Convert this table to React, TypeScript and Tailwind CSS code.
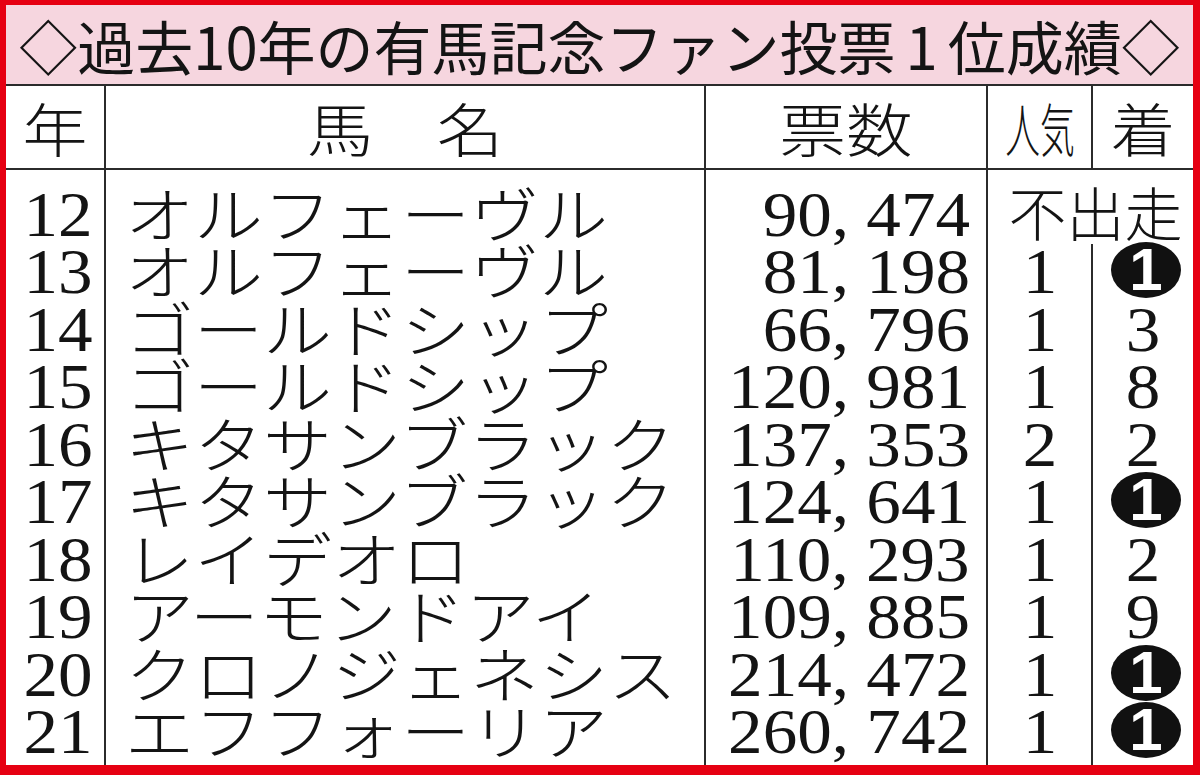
import React from "react";

type Row = { y: string; name: string; votes: string; pop: string | null; fin: string | null };

const rows: Row[] = [
  { y: "12", name: "オルフェーヴル", votes: "90, 474", pop: null, fin: null },
  { y: "13", name: "オルフェーヴル", votes: "81, 198", pop: "1", fin: "W1" },
  { y: "14", name: "ゴールドシップ", votes: "66, 796", pop: "1", fin: "3" },
  { y: "15", name: "ゴールドシップ", votes: "120, 981", pop: "1", fin: "8" },
  { y: "16", name: "キタサンブラック", votes: "137, 353", pop: "2", fin: "2" },
  { y: "17", name: "キタサンブラック", votes: "124, 641", pop: "1", fin: "W1" },
  { y: "18", name: "レイデオロ", votes: "110, 293", pop: "1", fin: "2" },
  { y: "19", name: "アーモンドアイ", votes: "109, 885", pop: "1", fin: "9" },
  { y: "20", name: "クロノジェネシス", votes: "214, 472", pop: "1", fin: "W1" },
  { y: "21", name: "エフフォーリア", votes: "260, 742", pop: "1", fin: "W1" },
];

const line = "border-[#2b2b2b]";
const serif = "font-['Liberation_Serif',serif]";
const goth = "font-['Noto_Sans_CJK_JP',sans-serif]";

function Win() {
  return (
    <span className="ml-[6px] flex h-[56px] w-[70px] shrink-0 -translate-y-[2px] items-center justify-center rounded-[50%] bg-[#111]">
      <span className="font-['Liberation_Sans',sans-serif] text-[60px] font-bold leading-none text-white">1</span>
    </span>
  );
}

export default function App() {
  return (
    <div className="flex h-[775px] w-[1200px] flex-col overflow-hidden border-t-[5px] border-r-[7px] border-b-[10px] border-l-[6px] border-[#e60012] bg-white text-[#141414]">
      {/* title */}
      <div className={`flex h-[79px] shrink-0 items-center justify-center bg-[#f6d6df] ${goth} text-[58px] leading-none whitespace-nowrap`}>
        <span>◇過去10年の有馬記念ファン投票<span className="mx-[10px]">1</span>位成績◇</span>
      </div>

      {/* header */}
      <div className={`grid h-[86px] shrink-0 grid-cols-[100px_600px_282px_105px_1fr] border-y-2 ${line} ${goth} text-[58px] font-light leading-none`}>
        <div className={`flex items-center justify-center border-r-2 ${line}`}>
          <span className="inline-block scale-x-[1.12]">年</span>
        </div>
        <div className={`flex items-center justify-center gap-[72px] border-r-2 ${line}`}>
          <span className="inline-block scale-x-[1.15]">馬</span>
          <span className="inline-block scale-x-[1.15]">名</span>
        </div>
        <div className={`flex items-center justify-center border-r-2 ${line}`}>
          <span className="inline-block scale-x-[1.15]">票数</span>
        </div>
        <div className={`flex items-center justify-center border-r-2 ${line}`}>
          <span className="inline-block scale-x-[0.6] whitespace-nowrap">人気</span>
        </div>
        <div className="flex items-center justify-center">
          <span className="inline-block scale-x-[1.12]">着</span>
        </div>
      </div>

      {/* body */}
      <div className="grid min-h-0 flex-1 grid-cols-[100px_600px_282px_105px_1fr] grid-rows-[16px_repeat(10,57.5px)_1fr]">
        {/* top spacer */}
        <div className={`border-r-2 ${line}`} />
        <div className={`border-r-2 ${line}`} />
        <div className={`border-r-2 ${line}`} />
        <div className="col-span-2" />

        {rows.map((r) => (
          <React.Fragment key={r.y}>
            <div className={`flex items-center justify-center border-r-2 ${line} pl-[6px] ${serif} text-[64px] leading-none`}>
              <span className="inline-block scale-x-[1.08]">{r.y}</span>
            </div>
            <div className={`flex items-center border-r-2 ${line} pl-[19px] ${goth} text-[60px] font-light leading-none whitespace-nowrap`}>
              <span className="inline-block -translate-y-[3px] origin-left scale-x-[1.15]">{r.name}</span>
            </div>
            <div className={`flex items-center justify-end border-r-2 ${line} pr-[16px] ${serif} text-[64px] leading-none whitespace-pre`}>
              <span className="inline-block origin-right scale-x-[1.08]">{r.votes}</span>
            </div>
            {r.pop === null ? (
              <div className={`col-span-2 flex items-center justify-center pl-[10px] ${goth} text-[58px] font-light leading-none`}>
                <span className="-translate-y-[4px]">不出走</span>
              </div>
            ) : (
              <>
                <div className={`flex items-center justify-center border-r-2 ${line} ${serif} text-[64px] leading-none`}>
                  <span className="inline-block scale-x-[1.08]">{r.pop}</span>
                </div>
                <div className={`flex items-center justify-center ${serif} text-[64px] leading-none`}>
                  {r.fin === "W1" ? (
                    <Win />
                  ) : (
                    <span className="inline-block scale-x-[1.08]">{r.fin}</span>
                  )}
                </div>
              </>
            )}
          </React.Fragment>
        ))}

        {/* bottom spacer */}
        <div className={`border-r-2 ${line}`} />
        <div className={`border-r-2 ${line}`} />
        <div className={`border-r-2 ${line}`} />
        <div className={`border-r-2 ${line}`} />
        <div />
      </div>
    </div>
  );
}
